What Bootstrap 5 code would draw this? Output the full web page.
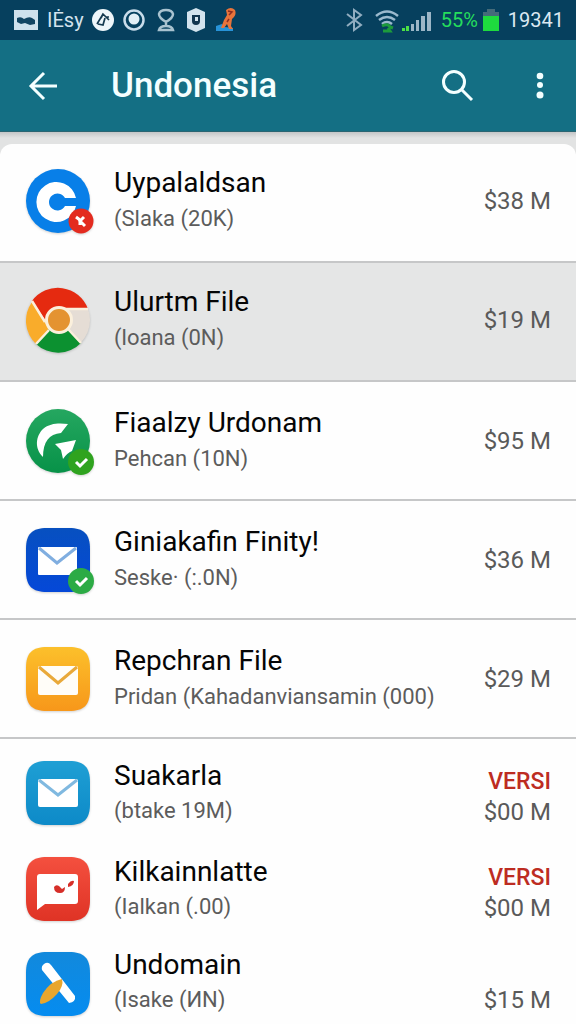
<!DOCTYPE html>
<html lang="id">
<head>
<meta charset="utf-8">
<meta name="viewport" content="width=device-width, initial-scale=1">
<title>Undonesia</title>
<link href="https://cdn.jsdelivr.net/npm/bootstrap@5.3.0/dist/css/bootstrap.min.css" rel="stylesheet">
<style>
  body { font-family: Roboto, "Liberation Sans", sans-serif; background: #fefefe; color: #050505; }
  svg { display: block; flex: none; }
  .status-bar { background: #06405e; color: #d3e3ee; height: 40px; padding: 0 12px 0 13px; font-size: 20px; line-height: 40px; }
  .status-time { color: #dce9f2; }
  .status-charge { color: #25dd5c; }
  .app-bar { background: #146f84; height: 92px; padding: 0 15px 0 22px; border-bottom: 1px solid #2a6572; }
  .app-title { font-size: 35px; line-height: 44px; font-weight: 500; color: #f4ffff; margin-left: 45px; }
  .bar-btn { border: 0; background: none; padding: 4px; color: #f4ffff; }
  .bar-actions { gap: 40px; }
  .list-backdrop { background: linear-gradient(#c4c6c7, #e2e3e3 6px, #e2e3e3 40px, #fefefe 40px); padding-top: 12px; }
  .app-list { background: #fefefe; border-radius: 12px 12px 0 0; overflow: hidden; }
  .app-row { padding: 0 25px; gap: 23px; height: 119px; border-bottom: 2px solid #c6c7c8; }
  .app-row.picked { background: #e5e6e6; }
  .app-row.tight { height: 96px; border: 0; }
  .app-row.final { height: 86px; padding-top: 10px; }
  .after-rule { padding-top: 6px; }
  .app-icon { position: relative; width: 66px; height: 66px; flex: none; }
  .app-icon > svg { filter: drop-shadow(0 1px 1px rgba(0,0,0,.18)); overflow: visible; }
  .app-name { font-size: 28px; line-height: 37px; white-space: nowrap; }
  .app-note { font-size: 22px; line-height: 36px; color: #5c5c5c; white-space: nowrap; }
  .tight .app-name { line-height: 36px; }
  .tight .app-note { line-height: 34px; }
  .app-price { font-size: 24px; line-height: 30px; color: #5a5a5a; text-align: right; white-space: nowrap; }
  .app-flag { color: #bd2c22; font-size: 23px; font-weight: 500; }
</style>
</head>
<body>
<svg width="0" height="0" class="position-absolute" aria-hidden="true">
  <defs>
    <linearGradient id="gGreen" x2="0" y2="1"><stop stop-color="#25a760"/><stop offset="1" stop-color="#079248"/></linearGradient>
    <linearGradient id="gNavy" x2="0" y2="1"><stop stop-color="#0750c0"/><stop offset="1" stop-color="#0548d8"/></linearGradient>
    <linearGradient id="gGold" x2="0" y2="1"><stop stop-color="#fcc02b"/><stop offset="1" stop-color="#f7971a"/></linearGradient>
    <linearGradient id="gSky" x2="0" y2="1"><stop stop-color="#1f9fd4"/><stop offset="1" stop-color="#0d8ac8"/></linearGradient>
    <linearGradient id="gRed" x2="0" y2="1"><stop stop-color="#f4503f"/><stop offset="1" stop-color="#df3325"/></linearGradient>
    <linearGradient id="gBlue" x2="0" y2="1"><stop stop-color="#1289dc"/><stop offset="1" stop-color="#058cf0"/></linearGradient>
    <path id="tile" d="M22 1H44C59 1 65 7 65 22V44C65 59 59 65 44 65H22C7 65 1 59 1 44V22C1 7 7 1 22 1Z"/>
    <g id="tick"><circle cx="56" cy="54" r="13"/><path d="M51 54l4 4 7-7" fill="none" stroke="#fff" stroke-width="3"/></g>
  </defs>
</svg>

<div class="status-bar d-flex align-items-center justify-content-between">
  <div class="d-flex align-items-center">
    <svg width="26" height="24" viewBox="0 0 26 24"><path fill="#cfe1ec" d="M1 2h24v20H1z"/><path fill="#124562" d="M4 10q4-2 7 1 5-3 8-1l3 2v4l-5 1-5-2-4 1-4-2z"/></svg>
    <span class="ms-2">IĖsy</span>
    <svg class="ms-2" width="22" height="24" viewBox="1 0 22 24"><circle cx="12" cy="12" r="11" fill="#eef6fa"/><path d="M6 16l6-10 3 3 3 0M7 16l5 1 2-7M12 6l-2 4M15 9l3 3" fill="none" stroke="#153a50" stroke-width="1.700"/></svg>
    <svg class="ms-2" width="24" height="24" viewBox="0 0 24 24"><circle cx="12" cy="12" r="9.500" fill="none" stroke="#c8dcea" stroke-width="2.500"/><circle cx="12" cy="11" r="5.500" fill="#e2eff6"/></svg>
    <svg class="ms-2" width="24" height="24" viewBox="0 0 24 24"><path d="M12 14q-7-4-7-8 1-4 7-4t7 4q0 4-7 8zM12 14v4M5 22q1-4 7-4t7 4z" fill="none" stroke="#a9c3d0" stroke-width="2.500"/></svg>
    <svg class="ms-2" width="20" height="26" viewBox="0 0 20 26"><path d="M1 5l9-4 9 4v16l-9 4-9-4z" fill="#d3e3ee"/><path d="M6 8h8v6q0 4-4 4t-4-4z" fill="#12354f"/><path d="M9 10h3v4H9z" fill="#d3e3ee"/></svg>
    <svg class="ms-2" width="24" height="26" viewBox="0 0 24 26"><path d="M2 19l6-2 3 3 8 1v3H2z" fill="#2793d8"/><path d="M12 3q5-4 9 0 2 5-3 9l-1 7 2 3h-4l-2-5-3 4H7l3-8 3-5z" fill="#e8743b"/><path d="M14 4l4 1-3 3M15 12l-2 3" fill="none" stroke="#8d2e22" stroke-width="1.500"/></svg>
  </div>
  <div class="d-flex align-items-center">
    <svg width="20" height="24" viewBox="0 0 20 24"><path d="M2 6l14 11-7 5V2l7 5L2 18" fill="none" stroke="#91adc0" stroke-width="2"/></svg>
    <svg class="ms-2" width="60" height="26" viewBox="0 0 60 26"><path d="M3 9q11-9 22 0M6 13q8-6 16 0M9 17q5-4 10 0" fill="none" stroke="#9cbace" stroke-width="2.500"/><path d="M9 19q6-3 8 1l3 1M10 24h7l-2-3" fill="none" stroke="#1d9b3c" stroke-width="3"/><path fill="#4ce046" d="M29 21h3v3h-3zM33 19h3v5h-3z"/><path fill="#9cb6c7" d="M38 17h3v7h-3zM43 13h3v11h-3zM48 9h4v15h-4zM54 5h4v19h-4z"/></svg>
    <span class="status-charge ms-2">55%</span>
    <svg class="ms-1" width="18" height="26" viewBox="0 0 18 26"><path fill="#456b79" d="M5 2h8v3h4v4H1V5h4z"/><path fill="#1edb3e" d="M1 9h16v15H1z"/></svg>
    <span class="status-time ms-2">19341</span>
  </div>
</div>

<header class="app-bar d-flex align-items-center">
  <button class="bar-btn" type="button" aria-label="Back"><svg width="36" height="32" viewBox="0 0 36 32" fill="none" stroke="currentColor" stroke-width="3"><path d="M31 16H6M18 3L5 16l13 13"/></svg></button>
  <h1 class="app-title mb-0 me-auto">Undonesia</h1>
  <div class="bar-actions d-flex align-items-center">
    <button class="bar-btn" type="button" aria-label="Search"><svg width="36" height="36" viewBox="0 0 36 36" fill="none" stroke="currentColor" stroke-width="3"><circle cx="15" cy="14" r="10.500"/><path d="M22 21l11 11"/></svg></button>
    <button class="bar-btn" type="button" aria-label="More options"><svg width="34" height="32" viewBox="0 0 34 32" fill="currentColor"><circle cx="17" cy="6" r="3.300"/><circle cx="17" cy="15" r="3"/><circle cx="17" cy="25" r="3.500"/></svg></button>
  </div>
</header>

<main class="list-backdrop">
  <ul class="app-list list-unstyled mb-0">
    <li class="app-row d-flex align-items-center pb-1">
      <span class="app-icon"><svg width="66" height="66" viewBox="0 0 66 66"><circle cx="33" cy="33" r="32" fill="#087fe8"/><path d="M51 30H40A8.500 8.500 0 1 0 40 38H51A20 20 0 1 1 51 30Z" fill="#fff"/><circle cx="56" cy="53" r="12.500" fill="#e32b1f"/><path d="M51 49l4 3v5M54 54l5-5M56 54l4 4" fill="none" stroke="#fff" stroke-width="3"/></svg></span>
      <div class="flex-grow-1"><div class="app-name">Uypalaldsan</div><div class="app-note">(Slaka (20K)</div></div>
      <div class="app-price">$38 M</div>
    </li>
    <li class="app-row picked d-flex align-items-center pb-1">
      <span class="app-icon"><svg width="66" height="66" viewBox="0 0 66 66"><circle cx="33" cy="33" r="32" fill="#e5ddd5"/><path d="M7 14A32 32 0 0 1 63 22H33L21 34Z" fill="#e52a10"/><path d="M7 15A32 32 0 0 0 11 57L24 42Z" fill="#f9ac2b"/><path d="M11 57A32 32 0 0 0 56 56L43 42H24Z" fill="#0c9130"/><path d="M7 14L20 35M24 43L11 57M43 42L56 56M36 22H63" fill="none" stroke="#fbf0dc" stroke-width="2.500"/><circle cx="34" cy="33" r="12.500" fill="#e49331" stroke="#fbf0dc" stroke-width="3"/></svg></span>
      <div class="flex-grow-1"><div class="app-name">Ulurtm File</div><div class="app-note">(loana (0N)</div></div>
      <div class="app-price">$19 M</div>
    </li>
    <li class="app-row d-flex align-items-center">
      <span class="app-icon"><svg width="66" height="66" viewBox="0 0 66 66"><circle cx="33" cy="33" r="32" fill="url(#gGreen)"/><path d="M43 16L36 25C24 26 18 34 18 49 9 40 11 28 18 21 25 15 34 15 43 16ZM30 36L51 32 47 43Q42 45 38 51L36 42Z" fill="#fff"/><use href="#tick" fill="#2fa31f"/></svg></span>
      <div class="flex-grow-1"><div class="app-name">Fiaalzy Urdonam</div><div class="app-note">Pehcan (10N)</div></div>
      <div class="app-price">$95 M</div>
    </li>
    <li class="app-row d-flex align-items-center">
      <span class="app-icon"><svg width="66" height="66" viewBox="0 0 66 66"><use href="#tile" fill="url(#gNavy)"/><rect x="13" y="20" width="39" height="28" rx="1" fill="#fff"/><path d="M14 21L32 36 51 21" fill="none" stroke="#80aee0" stroke-width="3"/><use href="#tick" fill="#2cab45"/></svg></span>
      <div class="flex-grow-1"><div class="app-name">Giniakafin Finity!</div><div class="app-note">Seske· (:.0N)</div></div>
      <div class="app-price">$36 M</div>
    </li>
    <li class="app-row d-flex align-items-center">
      <span class="app-icon"><svg width="66" height="66" viewBox="0 0 66 66"><use href="#tile" fill="url(#gGold)"/><rect x="13" y="20" width="40" height="29" rx="2" fill="#fffdf8"/><path d="M14 21L33 37 52 21" fill="none" stroke="#e9a93a" stroke-width="3"/></svg></span>
      <div class="flex-grow-1"><div class="app-name">Repchran File</div><div class="app-note">Pridan (Kahadanviansamin (000)</div></div>
      <div class="app-price">$29 M</div>
    </li>
    <li class="after-rule">
      <ul class="list-unstyled mb-0">
        <li class="app-row tight d-flex align-items-center">
          <span class="app-icon"><svg width="66" height="66" viewBox="0 0 66 66"><use href="#tile" fill="url(#gSky)"/><rect x="13" y="19" width="40" height="28" rx="2" fill="#fff"/><path d="M14 20L33 35 52 20" fill="none" stroke="#80b9e0" stroke-width="3"/></svg></span>
          <div class="flex-grow-1"><div class="app-name">Suakarla</div><div class="app-note">(btake 19M)</div></div>
          <div class="app-price pt-2"><div class="app-flag">VERSI</div>$00 M</div>
        </li>
        <li class="app-row tight d-flex align-items-center">
          <span class="app-icon"><svg width="66" height="66" viewBox="0 0 66 66"><use href="#tile" fill="url(#gRed)"/><path d="M15 18H50Q53 18 53 21V45Q53 48 50 48H20L12 54V21Q12 18 15 18Z" fill="#fff"/><path d="M29 31Q31 28 34 30L37 33 40 31Q40 37 35 37 29 37 29 31ZM43 28Q46 24 49 25 49 30 43 31Z" fill="#d62f29"/></svg></span>
          <div class="flex-grow-1"><div class="app-name">Kilkainnlatte</div><div class="app-note">(Ialkan (.00)</div></div>
          <div class="app-price pt-2"><div class="app-flag">VERSI</div>$00 M</div>
        </li>
        <li class="app-row tight final d-flex align-items-start">
          <span class="app-icon mt-1"><svg width="66" height="66" viewBox="0 0 66 66"><use href="#tile" fill="url(#gBlue)"/><path d="M19 13Q23 10 26 14L50 45Q51 51 44 52L17 19Q16 15 19 13Z" fill="#fff"/><path d="M37 28Q39 35 32 43 24 52 16 53 13 51 18 42 26 30 37 28Z" fill="#e8a62d"/></svg></span>
          <div class="flex-grow-1"><div class="app-name">Undomain</div><div class="app-note">(Isake (ИN)</div></div>
          <div class="app-price align-self-end pb-2">$15 M</div>
        </li>
      </ul>
    </li>
  </ul>
</main>
<script src="https://cdn.jsdelivr.net/npm/bootstrap@5.3.0/dist/js/bootstrap.bundle.min.js"></script>
</body>
</html>
